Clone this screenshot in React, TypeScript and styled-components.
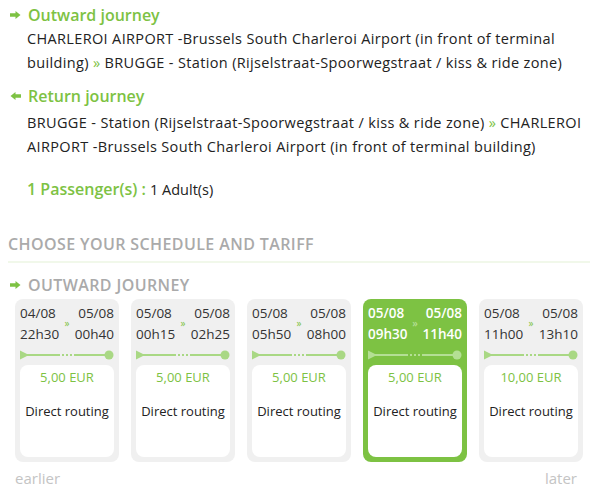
import styled, { createGlobalStyle } from 'styled-components'

const GREEN = '#7dc243'

const GlobalStyle = createGlobalStyle`
    body {
        margin: 0;
        background: #fff;
        font-family: "Open Sans", "Liberation Sans", sans-serif;
        color: #222;
    }
`

interface Slot {
    fromDate: string;
    fromTime: string;
    toDate: string;
    toTime: string;
    price: string;
    selected?: boolean;
}

const slots: Slot[] = [
    { fromDate: '04/08', fromTime: '22h30', toDate: '05/08', toTime: '00h40', price: '5,00 EUR' },
    { fromDate: '05/08', fromTime: '00h15', toDate: '05/08', toTime: '02h25', price: '5,00 EUR' },
    { fromDate: '05/08', fromTime: '05h50', toDate: '05/08', toTime: '08h00', price: '5,00 EUR' },
    { fromDate: '05/08', fromTime: '09h30', toDate: '05/08', toTime: '11h40', price: '5,00 EUR', selected: true },
    { fromDate: '05/08', fromTime: '11h00', toDate: '05/08', toTime: '13h10', price: '10,00 EUR' },
]

// small block arrow, pointing left for the return leg
const Arrow = ({ left }: { left?: boolean }) => (
    <svg width="11" height="8" viewBox="0 0 11 8" style={{ transform: left ? 'scaleX(-1)' : undefined }}>
        <path d="M0 2.2 H5.5 V0 L10.5 4 L5.5 8 V5.8 H0 Z" fill={GREEN} />
    </svg>
)

const Timeline = ({ selected }: { selected?: boolean }) => {
    const c = selected ? '#b4df94' : '#a9d884'
    return (
        <svg width="94" height="12" viewBox="0 0 94 12">
            <path d="M0 1.5 L9 6 L0 10.5 Z" fill={c} />
            <rect x="6" y="5" width="34" height="2" fill={c} />
            <rect x="42" y="5" width="2" height="2" fill={c} />
            <rect x="46" y="5" width="2" height="2" fill={c} />
            <rect x="50" y="5" width="2" height="2" fill={c} />
            <rect x="54" y="5" width="32" height="2" fill={c} />
            <circle cx="89" cy="6" r="4.5" fill={c} />
        </svg>
    )
}

const App = () => {
    return (
        <Page>
            <GlobalStyle />
            <Journey>
                <JourneyTitle><Arrow /> Outward journey</JourneyTitle>
                <JourneyText>
                    CHARLEROI AIRPORT -Brussels South Charleroi Airport (in front of terminal building) <Sep>»</Sep> BRUGGE - Station (Rijselstraat-Spoorwegstraat / kiss &amp; ride zone)
                </JourneyText>
            </Journey>
            <Journey>
                <JourneyTitle><Arrow left /> Return journey</JourneyTitle>
                <JourneyText offset={3}>
                    BRUGGE - Station (Rijselstraat-Spoorwegstraat / kiss &amp; ride zone) <Sep>»</Sep> CHARLEROI AIRPORT -Brussels South Charleroi Airport (in front of terminal building)
                </JourneyText>
            </Journey>
            <Passengers>
                1 Passenger(s) : <PassengerCount>1 Adult(s)</PassengerCount>
            </Passengers>

            <SectionTitle>Choose your schedule and tariff</SectionTitle>
            <SubTitle><Arrow /> Outward journey</SubTitle>

            <Cards>
                {slots.map((s, i) => (
                    <Card key={i} selected={s.selected}>
                        <Times selected={s.selected}>
                            <TimeCol>
                                <span>{s.fromDate}</span>
                                <span>{s.fromTime}</span>
                            </TimeCol>
                            <Chevron selected={s.selected}>»</Chevron>
                            <TimeCol right>
                                <span>{s.toDate}</span>
                                <span>{s.toTime}</span>
                            </TimeCol>
                        </Times>
                        <TimelineRow><Timeline selected={s.selected} /></TimelineRow>
                        <Inner>
                            <Price>{s.price}</Price>
                            <Routing>Direct routing</Routing>
                        </Inner>
                    </Card>
                ))}
            </Cards>
            <Nav>
                <span>earlier</span>
                <span>later</span>
            </Nav>
        </Page>
    )
}

export default App

const Page = styled.div`
    width: 598px;
    padding: 3px 6px 0 8px;
    box-sizing: border-box;
`

const Journey = styled.div`
    margin-bottom: 10px;
`

const JourneyTitle = styled.div`
    display: flex;
    align-items: center;
    gap: 7px;
    padding-left: 2px;
    color: ${GREEN};
    font-size: 16px;
    font-weight: 600;
    line-height: 24px;
`

const JourneyText = styled.div<{ offset?: number }>`
    margin-top: ${p => p.offset || 0}px;
    padding-left: 19px;
    font-size: 14.5px;
    letter-spacing: 0.35px;
    line-height: 23.5px;
    color: #222;
`

const Sep = styled.span`
    color: ${GREEN};
`

const Passengers = styled.div`
    margin-top: 20px;
    padding-left: 19px;
    color: ${GREEN};
    font-size: 16px;
    font-weight: 600;
`

const PassengerCount = styled.span`
    color: #222;
    font-size: 14.5px;
    font-weight: 400;
`

const SectionTitle = styled.div`
    margin-top: 33px;
    margin-right: 2px;
    padding-bottom: 6px;
    border-bottom: 2px solid #f1f8ea;
    color: #aaa;
    font-size: 16px;
    letter-spacing: 0.4px;
    font-weight: 600;
    text-transform: uppercase;
`

const SubTitle = styled.div`
    display: flex;
    align-items: center;
    gap: 7px;
    margin-top: 11px;
    padding-left: 2px;
    color: #aaa;
    font-size: 16px;
    letter-spacing: 0.4px;
    font-weight: 600;
    text-transform: uppercase;
`

const Cards = styled.div`
    display: grid;
    grid-template-columns: repeat(5, 104px);
    gap: 12px;
    margin-top: 3px;
    padding-left: 7px;
`

const Card = styled.div<{ selected?: boolean }>`
    height: 163px;
    box-sizing: border-box;
    padding: 4px 5px 5px 5px;
    border-radius: 8px;
    background: ${p => (p.selected ? GREEN : '#f0f0f0')};
    display: flex;
    flex-direction: column;
`

const Times = styled.div<{ selected?: boolean }>`
    display: flex;
    justify-content: space-between;
    align-items: center;
    font-size: 13.5px;
    line-height: 20.5px;
    color: ${p => (p.selected ? '#fff' : '#333')};
    font-weight: ${p => (p.selected ? 600 : 400)};
`

const TimeCol = styled.div<{ right?: boolean }>`
    display: flex;
    flex-direction: column;
    align-items: ${p => (p.right ? 'flex-end' : 'flex-start')};
`

const Chevron = styled.span<{ selected?: boolean }>`
    font-size: 10px;
    color: ${p => (p.selected ? '#b4df94' : GREEN)};
`

const TimelineRow = styled.div`
    margin-top: 5px;
    height: 12px;
    line-height: 0;
`

const Inner = styled.div`
    flex: 1;
    margin-top: 4px;
    background: #fff;
    border-radius: 8px;
    text-align: center;
`

const Price = styled.div`
    margin-top: 2px;
    color: ${GREEN};
    font-size: 13px;
    line-height: 20px;
`

const Routing = styled.div`
    margin-top: 14px;
    font-size: 13px;
    line-height: 20px;
    color: #222;
`

const Nav = styled.div`
    display: flex;
    justify-content: space-between;
    margin-top: 6px;
    padding: 0 7px;
    width: 576px;
    box-sizing: border-box;
    color: #c4c4c4;
    font-size: 15px;
`
